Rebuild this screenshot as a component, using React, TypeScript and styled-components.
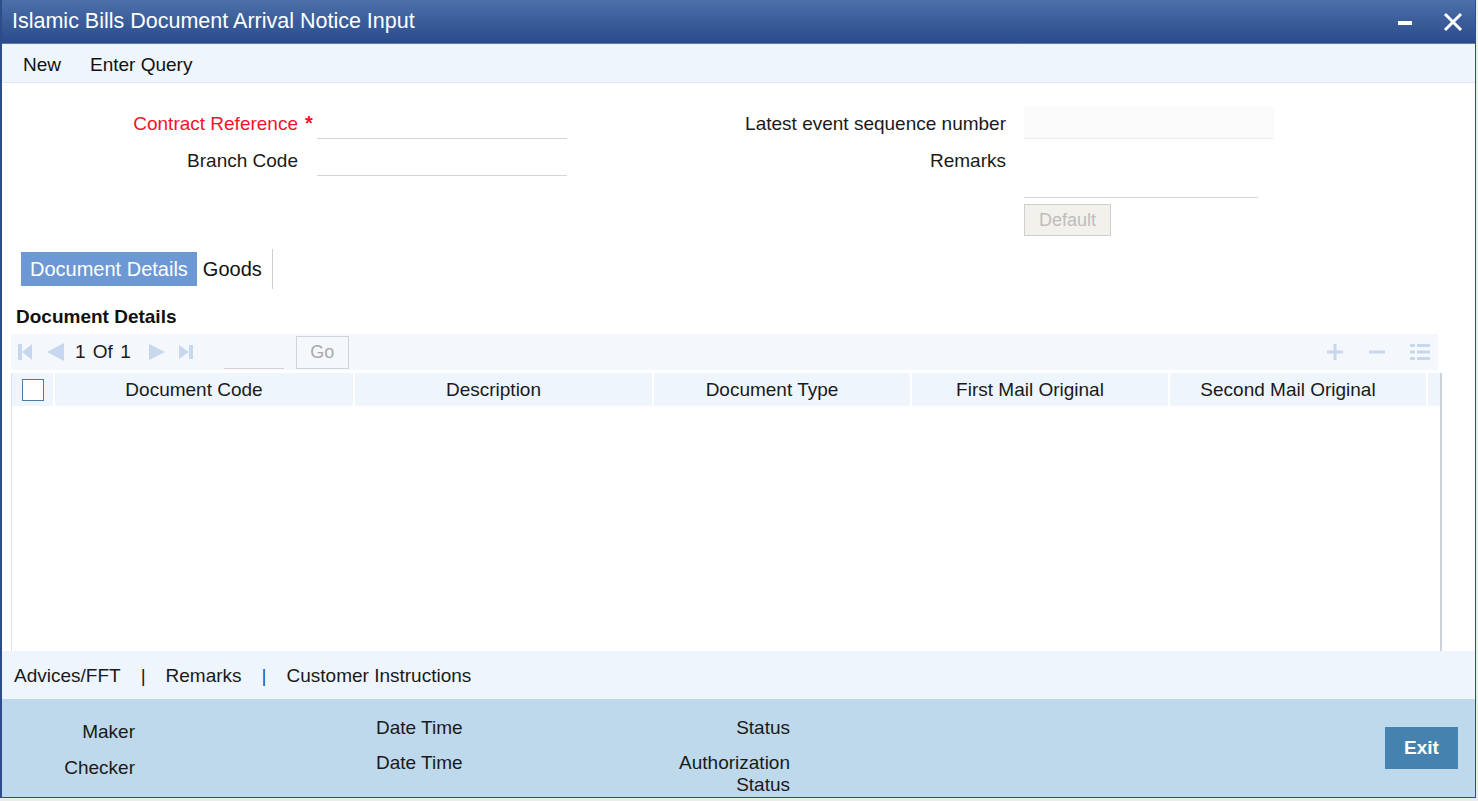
import styled, { createGlobalStyle } from 'styled-components';

const GlobalStyle = createGlobalStyle`
  html, body {
    margin: 0;
    padding: 0;
    background: #ececec;
  }
  body {
    font-family: 'Liberation Sans', Arial, sans-serif;
    color: #1a1a1a;
  }
  * {
    box-sizing: border-box;
  }
`;

const columns = [
  'Document Code',
  'Description',
  'Document Type',
  'First Mail Original',
  'Second Mail Original',
];

function App() {
  return (
    <>
      <GlobalStyle />
      <Window>
        <TitleBar>
          <Title>Islamic Bills Document Arrival Notice Input</Title>
          <WinControls>
            <svg width="16" height="16" viewBox="0 0 16 16">
              <rect x="1" y="7" width="14" height="4" fill="#fff" />
            </svg>
            <svg width="20" height="20" viewBox="0 0 20 20">
              <path d="M2 2 L18 18 M18 2 L2 18" stroke="#fff" strokeWidth="3" />
            </svg>
          </WinControls>
        </TitleBar>

        <Toolbar>
          <ToolItem>New</ToolItem>
          <ToolItem>Enter Query</ToolItem>
        </Toolbar>

        <FormGrid>
          <Label $required>Contract Reference</Label>
          <Marker>*</Marker>
          <LineInput />
          <Label>Latest event sequence number</Label>
          <span />
          <LineInput $readOnly />

          <Label>Branch Code</Label>
          <span />
          <LineInput />
          <Label>Remarks</Label>
          <span />
          <TextArea />

          <span />
          <span />
          <span />
          <span />
          <span />
          <DefaultButton>Default</DefaultButton>
        </FormGrid>

        <Tabs>
          <Tab $active>Document Details</Tab>
          <Tab>Goods</Tab>
        </Tabs>

        <SectionTitle>Document Details</SectionTitle>

        <GridBox>
          <GridToolbar>
            <Pager>
              <svg width="14" height="16" viewBox="0 0 14 16">
                <rect x="0" y="0" width="4" height="16" fill="#c7d7ee" />
                <path d="M14 0 L14 16 L4 8 Z" fill="#c7d7ee" />
              </svg>
              <svg width="17" height="18" viewBox="0 0 17 18" style={{ marginLeft: 15 }}>
                <path d="M17 0 L17 18 L0 9 Z" fill="#c7d7ee" />
              </svg>
              <PageText>1 Of 1</PageText>
              <svg width="16" height="16" viewBox="0 0 16 16" style={{ marginLeft: 18 }}>
                <path d="M0 0 L0 16 L16 8 Z" fill="#c7d7ee" />
              </svg>
              <svg width="14" height="14" viewBox="0 0 14 14" style={{ marginLeft: 14 }}>
                <path d="M0 0 L0 14 L10 7 Z" fill="#c7d7ee" />
                <rect x="10" y="0" width="4" height="14" fill="#c7d7ee" />
              </svg>
              <PageInput />
              <GoButton>Go</GoButton>
            </Pager>
            <RowActions>
              <svg width="18" height="18" viewBox="0 0 18 18">
                <path d="M9 1 V17 M1 9 H17" stroke="#c7d7ee" strokeWidth="3" />
              </svg>
              <svg width="18" height="18" viewBox="0 0 18 18">
                <path d="M1 9 H17" stroke="#c7d7ee" strokeWidth="3" />
              </svg>
              <svg width="20" height="18" viewBox="0 0 20 18">
                <g fill="#c7d7ee">
                  <rect x="0" y="1" width="5" height="3" />
                  <rect x="7" y="1" width="13" height="3" />
                  <rect x="0" y="7.5" width="5" height="3" />
                  <rect x="7" y="7.5" width="13" height="3" />
                  <rect x="0" y="14" width="5" height="3" />
                  <rect x="7" y="14" width="13" height="3" />
                </g>
              </svg>
            </RowActions>
          </GridToolbar>

          <Table>
            <HeaderRow>
              <HeaderCell $plain>
                <CheckBox />
              </HeaderCell>
              {columns.map((c) => (
                <HeaderCell key={c}>{c}</HeaderCell>
              ))}
              <HeaderCell $plain />
            </HeaderRow>
          </Table>
        </GridBox>

        <LinksBar>
          <LinkItem>Advices/FFT</LinkItem>
          <Sep>|</Sep>
          <LinkItem>Remarks</LinkItem>
          <Sep $blue>|</Sep>
          <LinkItem>Customer Instructions</LinkItem>
        </LinksBar>

        <AuditBar>
          <AuditCol $width={133} $align="right" $top={22} $gap={14}>
            <AuditText>Maker</AuditText>
            <AuditText>Checker</AuditText>
          </AuditCol>
          <AuditCol $width={200} $align="left" $top={18} $gap={13} $left={241}>
            <AuditText>Date Time</AuditText>
            <AuditText>Date Time</AuditText>
          </AuditCol>
          <AuditCol $width={200} $align="right" $top={18} $gap={13} $left={14}>
            <AuditText>Status</AuditText>
            <AuditText>
              Authorization
              <br />
              Status
            </AuditText>
          </AuditCol>
          <ExitButton>Exit</ExitButton>
        </AuditBar>
      </Window>
    </>
  );
}

export default App;

const Window = styled.div`
  width: 1476px;
  height: 798px;
  display: flex;
  flex-direction: column;
  background: #fff;
  border-left: 2px solid #2c4d8a;
  border-right: 1px solid #2c4d8a;
  border-bottom: 1px solid #2c4d8a;
  overflow: hidden;
`;

const TitleBar = styled.div`
  height: 44px;
  flex-shrink: 0;
  display: flex;
  align-items: center;
  justify-content: space-between;
  padding: 0 12px 0 10px;
  background: linear-gradient(to bottom, #4b70a9, #2a4b8b);
  border-bottom: 1px solid #5a7ca8;
`;

const Title = styled.div`
  color: #fff;
  font-size: 21.5px;
`;

const WinControls = styled.div`
  display: flex;
  align-items: center;
  gap: 30px;
  svg {
    display: block;
  }
`;

const Toolbar = styled.div`
  height: 39px;
  flex-shrink: 0;
  display: flex;
  align-items: center;
  gap: 29px;
  padding: 3px 0 0 21px;
  background: #eef5fd;
  border-bottom: 1px solid #e1e7ee;
`;

const ToolItem = styled.span`
  font-size: 19px;
  color: #111;
`;

const FormGrid = styled.div`
  display: grid;
  grid-template-columns: 296px 19px 250px 439px 18px 250px;
  row-gap: 5px;
  align-items: start;
  padding-top: 24px;
`;

const Label = styled.div<{ $required?: boolean }>`
  height: 32px;
  line-height: 34px;
  text-align: right;
  font-size: 19px;
  color: ${(p) => (p.$required ? '#f5122a' : '#1a1a1a')};
`;

const Marker = styled.div`
  height: 32px;
  line-height: 32px;
  padding-left: 7px;
  font-size: 20px;
  font-weight: bold;
  color: #f5122a;
`;

const LineInput = styled.div<{ $readOnly?: boolean }>`
  height: 32px;
  background: ${(p) => (p.$readOnly ? '#fafafa' : '#fff')};
  border-bottom: 1px solid ${(p) => (p.$readOnly ? '#ededed' : '#d4d4d4')};
`;

const TextArea = styled.div`
  width: 234px;
  height: 54px;
  border-bottom: 1px solid #d4d4d4;
`;

const DefaultButton = styled.div`
  width: 87px;
  height: 32px;
  margin-top: 1px;
  display: flex;
  align-items: center;
  justify-content: center;
  font-size: 18px;
  color: #bdbdbd;
  background: #f2f1ec;
  border: 1px solid #cfcfcf;
`;

const Tabs = styled.div`
  display: flex;
  align-items: center;
  margin: 16px 0 0 19px;
  height: 34px;
`;

const Tab = styled.div<{ $active?: boolean }>`
  height: ${(p) => (p.$active ? '34px' : '40px')};
  display: flex;
  align-items: center;
  padding: ${(p) => (p.$active ? '0 9px' : '0 10px 0 6px')};
  font-size: 20px;
  color: ${(p) => (p.$active ? '#fff' : '#111')};
  background: ${(p) => (p.$active ? '#6c98d4' : 'transparent')};
  border-right: ${(p) => (p.$active ? 'none' : '1px solid #cfcfcf')};
`;

const SectionTitle = styled.div`
  margin: 14px 0 0 14px;
  height: 34px;
  line-height: 34px;
  font-size: 19px;
  font-weight: bold;
  color: #111;
`;

const GridBox = styled.div`
  margin-left: 9px;
  width: 1431px;
  flex: 1;
  display: flex;
  flex-direction: column;
`;

const GridToolbar = styled.div`
  width: 1427px;
  height: 36px;
  flex-shrink: 0;
  display: flex;
  align-items: center;
  justify-content: space-between;
  background: #f4f8fd;
  padding: 0 8px 0 7px;
`;

const Pager = styled.div`
  display: flex;
  align-items: center;
  svg {
    display: block;
  }
`;

const PageText = styled.span`
  margin-left: 11px;
  font-size: 19px;
  word-spacing: 2px;
  color: #1a1a1a;
`;

const PageInput = styled.div`
  width: 60px;
  height: 32px;
  margin: 2px 0 0 31px;
  border-bottom: 1px solid #d4d4d4;
`;

const GoButton = styled.div`
  width: 53px;
  height: 33px;
  margin-left: 12px;
  display: flex;
  align-items: center;
  justify-content: center;
  font-size: 18px;
  color: #a9a9a9;
  border: 1px solid #d0d4d8;
`;

const RowActions = styled.div`
  display: flex;
  align-items: center;
  gap: 24px;
  svg {
    display: block;
  }
`;

const Table = styled.div`
  flex: 1;
  margin-top: 3px;
  border-left: 1px solid #dde3ea;
  border-right: 2px solid #cdd2d8;
  background: #fff;
`;

const HeaderRow = styled.div`
  display: grid;
  grid-template-columns: 41px 298px 297px 256px 256px 256px 1fr;
  column-gap: 2px;
  height: 31px;
`;

const HeaderCell = styled.div<{ $plain?: boolean }>`
  display: flex;
  align-items: center;
  justify-content: center;
  padding-right: ${(p) => (p.$plain ? '0' : '20px')};
  background: #eef5fd;
  font-size: 19px;
  line-height: 33px;
  color: #1a1a1a;
`;

const CheckBox = styled.div`
  width: 22px;
  height: 22px;
  background: #fff;
  border: 1px solid #4d7ba6;
`;

const LinksBar = styled.div`
  height: 48px;
  flex-shrink: 0;
  display: flex;
  align-items: center;
  padding: 2px 0 0 12px;
  background: #eef5fd;
  font-size: 19px;
`;

const LinkItem = styled.span`
  color: #1a1a1a;
`;

const Sep = styled.span<{ $blue?: boolean }>`
  margin: 0 20px;
  color: ${(p) => (p.$blue ? '#1f5b92' : '#1a1a1a')};
`;

const AuditBar = styled.div`
  height: 98px;
  flex-shrink: 0;
  display: flex;
  align-items: flex-start;
  background: #bed8ec;
  padding-right: 17px;
`;

const AuditCol = styled.div<{
  $width: number;
  $align: 'left' | 'right';
  $top: number;
  $gap: number;
  $left?: number;
}>`
  width: ${(p) => p.$width}px;
  margin-left: ${(p) => p.$left ?? 0}px;
  padding-top: ${(p) => p.$top}px;
  display: flex;
  flex-direction: column;
  gap: ${(p) => p.$gap}px;
  text-align: ${(p) => p.$align};
`;

const AuditText = styled.div`
  font-size: 19px;
  line-height: 22px;
  color: #1a1a1a;
`;

const ExitButton = styled.div`
  margin: 28px 0 0 auto;
  width: 73px;
  height: 42px;
  display: flex;
  align-items: center;
  justify-content: center;
  background: #4682b0;
  color: #fff;
  font-size: 19px;
  font-weight: bold;
`;
